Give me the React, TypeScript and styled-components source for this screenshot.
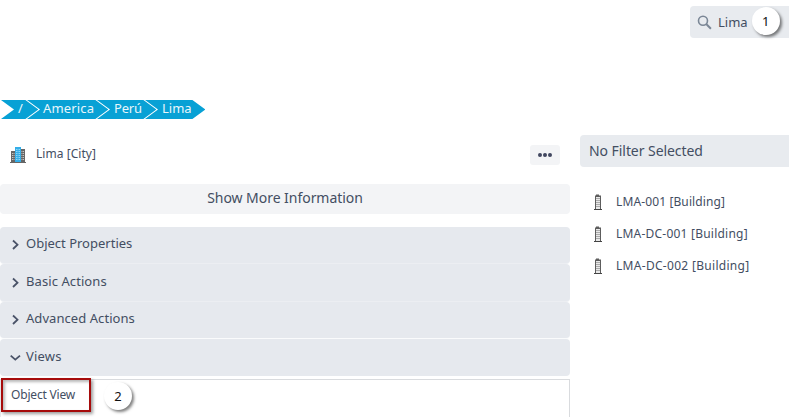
import React from "react";
import styled, { createGlobalStyle } from "styled-components";

const Global = createGlobalStyle`
  *{box-sizing:border-box}
  body{margin:0;background:#fff;overflow:hidden;color:#414c60;font-family:"Noto Sans","Open Sans",sans-serif;font-size:13px}
`;
const Page = styled.div`width:789px;height:417px;overflow:hidden;display:flex;flex-direction:column;`;
const TopBar = styled.header`height:94px;padding-top:6px;display:flex;justify-content:flex-end;align-items:flex-start;`;
const Search = styled.div`width:99px;height:32px;background:#e8ebef;border-radius:4px 0 0 4px;display:flex;align-items:center;padding-left:7px;`;
const SearchIcon = styled.svg`width:15px;height:15px;margin-right:6px;`;
const Label = styled.span<{ $size?: number; $track?: number; $color?: string }>`
  display:block;white-space:nowrap;line-height:20px;
  font-size:${p => p.$size ?? 13}px;letter-spacing:${p => p.$track ?? 0}px;color:${p => p.$color ?? "#434e62"};
`;
const Badge = styled.span`width:28px;height:28px;border-radius:50%;background:#fff;color:#111;box-shadow:2px 2px 3px rgba(0,0,0,.5);
  display:flex;align-items:center;justify-content:center;font-size:13px;flex:none;`;
const SearchBadge = styled(Badge)`margin:-2px 0 0 4px;`;
const Crumbs = styled.nav`height:41px;padding:6px 0 0 1px;display:flex;`;
const Crumb = styled.div<{ $w: number; $pad: number }>`
  width:${p => p.$w - 0.6}px;height:19px;flex:none;padding-left:${p => p.$pad}px;margin-right:-11.4px;background:#08a1d5;display:flex;align-items:center;
  clip-path:polygon(0 0,calc(100% - 13px) 0,100% 50%,calc(100% - 13px) 100%,0 100%,13px 50%);
`;
const CrumbText = styled(Label)`margin-top:-4px;`;
const Body = styled.div`display:grid;grid-template-columns:570px 209px;gap:10px;flex:1;`;
const Main = styled.main`display:flex;flex-direction:column;`;
const TitleRow = styled.div`height:49px;padding:0 10px;display:flex;align-items:flex-start;`;
const CityIcon = styled.svg`width:16px;height:16px;margin:12px 10px 0 0;`;
const TitleText = styled(Label)`margin-top:9px;`;
const More = styled.button`width:30px;height:20px;border:0;border-radius:3px;background:#f3f4f6;margin:10px 0 0 auto;padding:0;display:flex;align-items:center;justify-content:center;gap:1.4px;`;
const Dot = styled.i`width:3.8px;height:3.8px;border-radius:50%;background:#424760;`;
const InfoButton = styled.div`height:30px;border-radius:4px;background:#f3f4f6;margin-bottom:13px;display:flex;justify-content:center;padding-top:4px;`;
const Panel = styled.div<{ $h: number; $pad: number; $line?: string }>`
  height:${p => p.$h}px;border-radius:4px;background:#e6e9ee;padding:${p => p.$pad}px 0 0 10px;display:flex;flex:none;margin-bottom:1px;
  box-shadow:${p => p.$line ? `0 1px ${p.$line}` : "none"};
`;
const Arrow = styled.svg`width:11px;height:11px;margin:6px 5px 0 0;`;
const Content = styled.section`flex:1;margin-top:2px;border:1px solid #d9dbde;border-left-color:#e8e9eb;border-bottom:0;display:flex;align-items:flex-start;`;
const ViewLink = styled.div`width:90px;height:34px;margin:-2px 0 0 0;border:2px solid #a60b0b;box-shadow:2px 2px 3px rgba(0,0,0,.38),inset 2px 2px 3px rgba(0,0,0,.28);padding:5px 0 0 8px;`;
const ViewBadge = styled(Badge)`margin:2px 0 0 13px;`;
const Aside = styled.aside`display:flex;flex-direction:column;`;
const FilterHead = styled.div`height:32px;background:#e8ebef;border-radius:4px 0 0 4px;padding:6px 0 0 9px;margin-bottom:19px;`;
const Item = styled.div`height:32px;display:flex;padding:6px 0 0 13px;`;
const BuildingIcon = styled.svg`width:10px;height:17px;margin:2px 13px 0 0;`;

const crumbs = [
  { text: "/", w: 38, pad: 17, track: 0 },
  { text: "America", w: 82, pad: 16, track: 0.15 },
  { text: "Perú", w: 60, pad: 17, track: -0.2 },
  { text: "Lima", w: 61, pad: 17, track: 0 },
];
const panels = [
  { text: "Object Properties", h: 36, pad: 6, track: 0, open: false, line: "#eceef2" },
  { text: "Basic Actions", h: 37, pad: 7, track: 0.08, open: false, line: "#eceef2" },
  { text: "Advanced Actions", h: 36, pad: 6, track: 0.06, open: false, line: "#fafbfc" },
  { text: "Views", h: 37, pad: 7, track: 0.2, open: true, line: "" },
];
const items = [
  { text: "LMA-001 [Building]", track: 0.12 },
  { text: "LMA-DC-001 [Building]", track: 0.22 },
  { text: "LMA-DC-002 [Building]", track: 0.3 },
];

const Building = () => (
  <BuildingIcon viewBox="0 0 10 17">
    <path d="M3 .5h3v1h2v14H2v-14h1z" fill="#5d5d5d" />
    <path d="M3 3h4v12H3z" fill="#e9e9e9" />
    <path d="M3 4.5h4M3 6.5h4M3 8.5h4M3 10.5h4M3 12.5h4" stroke="#aaa" />
    <path d="M1 15.5h8" stroke="#444" />
  </BuildingIcon>
);

export default function App() {
  return (
    <Page>
      <Global />
      <TopBar>
        <Search>
          <SearchIcon viewBox="0 0 15 15" fill="none" stroke="#7b8796" strokeWidth="1.6">
            <circle cx="6" cy="5.8" r="4.5" /><path d="m9.2 9 4.7 4.7" strokeWidth="2" />
          </SearchIcon>
          <Label>Lima</Label>
          <SearchBadge>1</SearchBadge>
        </Search>
      </TopBar>
      <Crumbs>
        {crumbs.map(c => <Crumb key={c.text} $w={c.w} $pad={c.pad}><CrumbText $color="#e9f6fb" $track={c.track}>{c.text}</CrumbText></Crumb>)}
      </Crumbs>
      <Body>
        <Main>
          <TitleRow>
            <CityIcon viewBox="0 0 16 16">
              <path d="M1 4h4v11H1zM11 2h4v13h-4z" fill="#666" />
              <path d="M5 0h6v15H5z" fill="#35aee8" />
              <path d="M6 2.5h4M6 4.5h4M6 6.5h4M6 8.5h4M6 10.5h4M6 12.5h4" stroke="#8bd6f7" strokeDasharray="1 .5" />
              <path d="M2 6.5h3M2 8.5h3M2 10.5h3M2 12.5h3M11.5 4.5h3M11.5 6.5h3M11.5 8.5h3M11.5 10.5h3M11.5 12.5h3" stroke="#c4c4c4" strokeDasharray="1 .5" />
              <path d="M0 15.5h16" stroke="#666" />
            </CityIcon>
            <TitleText $size={12} $track={0.05}>Lima [City]</TitleText>
            <More aria-label="More options"><Dot /><Dot /><Dot /></More>
          </TitleRow>
          <InfoButton><Label $size={14} $track={-0.04}>Show More Information</Label></InfoButton>
          {panels.map(p => (
            <Panel key={p.text} $h={p.h} $pad={p.pad} $line={p.line}>
              <Arrow viewBox="0 0 11 11" fill="none" stroke="#4a5368" strokeWidth="1.8">
                <path d={p.open ? "m.7 3.6 4.6 4L10 3.6" : "m3 1.5 4.5 4.2L3 10"} />
              </Arrow>
              <Label $track={p.track}>{p.text}</Label>
            </Panel>
          ))}
          <Content>
            <ViewLink><Label $size={12} $track={-0.18}>Object View</Label></ViewLink>
            <ViewBadge>2</ViewBadge>
          </Content>
        </Main>
        <Aside>
          <FilterHead><Label $size={14} $track={-0.06}>No Filter Selected</Label></FilterHead>
          {items.map(t => <Item key={t.text}><Building /><Label $size={12} $track={t.track}>{t.text}</Label></Item>)}
        </Aside>
      </Body>
    </Page>
  );
}
